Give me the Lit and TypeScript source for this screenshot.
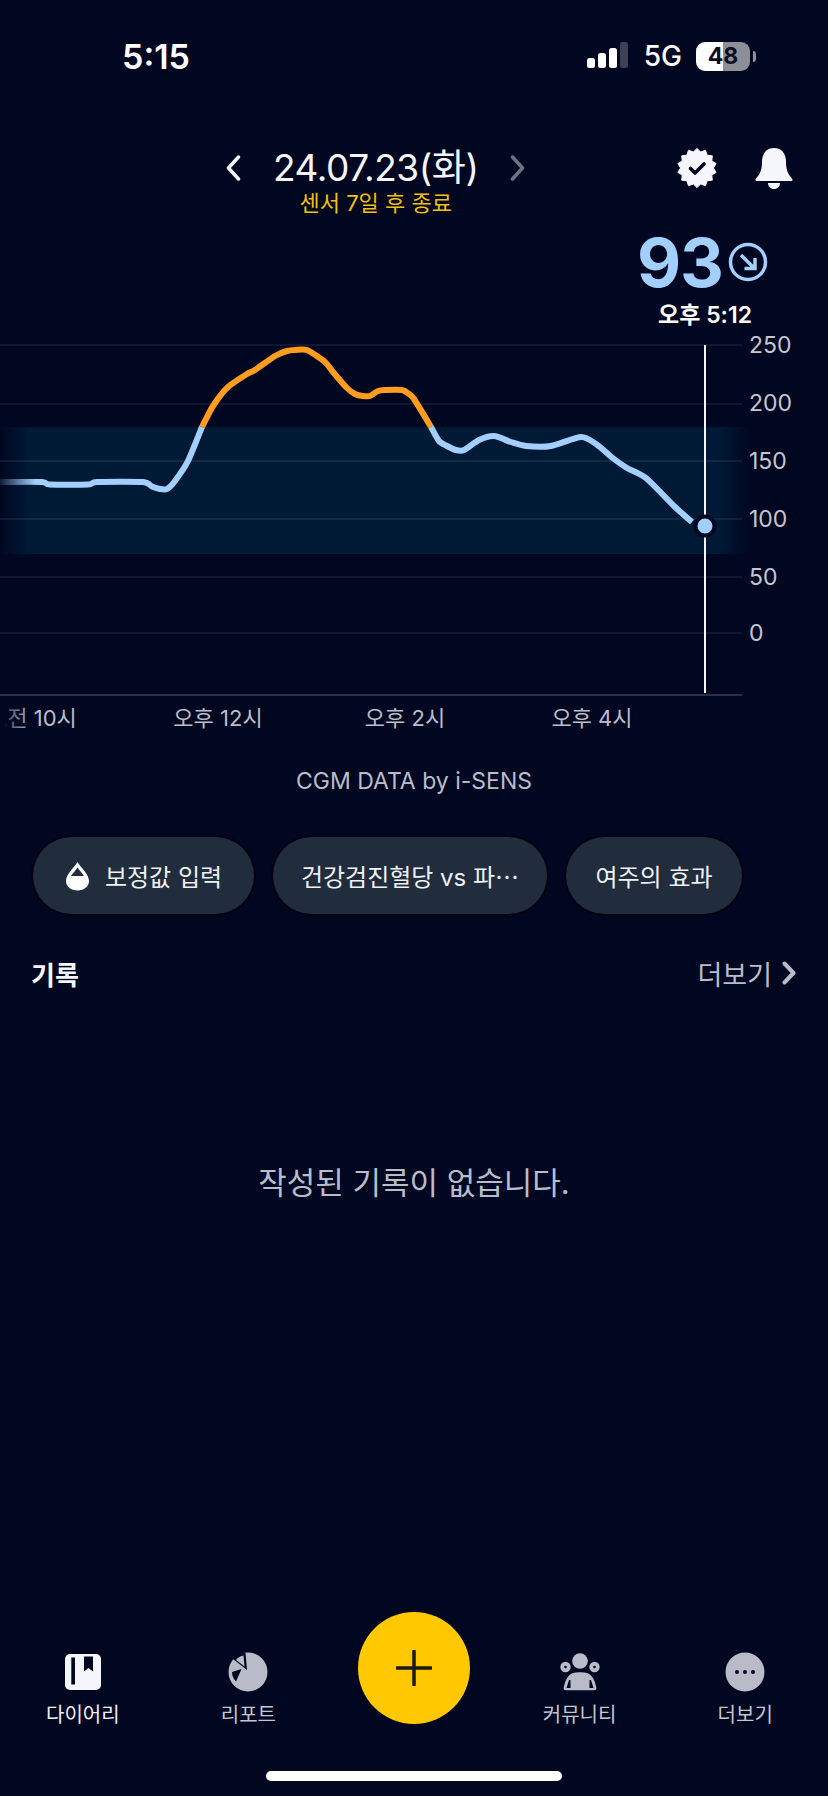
import { LitElement, html, css, svg } from 'lit';
import { customElement } from 'lit/decorators.js';

type Pt = [number, number];

const GRID = [346, 405, 462, 520, 578, 634];
const Y_LABELS = [
  ['250', 346],
  ['200', 404],
  ['150', 462],
  ['100', 520],
  ['50', 578],
  ['0', 634],
] as const;
const X_LABELS = [
  ['오후 12시', 218],
  ['오후 2시', 405],
  ['오후 4시', 592],
] as const;

// curve traced from the reference, in page coordinates
const BLUE_A: Pt[] = [[0, 483], [42, 483], [50, 485.5], [88, 485.5], [97, 483], [143, 483], [152, 487.5], [160, 490], [167, 490], [175, 482], [188, 462], [202, 428]];
const ORANGE: Pt[] = [[202, 428], [213, 407], [228, 388], [247, 375], [255, 371], [275, 357], [287, 352], [295, 351], [307, 351], [325, 363], [333, 373], [347, 389], [355, 395], [363, 397], [370, 397], [378, 392], [385, 391], [402, 391], [409, 395], [414, 400], [431, 428]];
const BLUE_B: Pt[] = [[431, 428], [439, 442], [447, 447], [456, 451], [464, 451], [479, 441], [494, 437], [511, 443], [526, 447], [551, 447], [581, 438], [596, 445], [614, 460], [627, 469], [646, 479], [674, 507], [692, 523]];

// catmull-rom through the traced points
function smooth(p: Pt[]) {
  let d = `M${p[0][0]} ${p[0][1]}`;
  for (let i = 0; i < p.length - 1; i++) {
    const a = p[Math.max(i - 1, 0)];
    const b = p[i];
    const c = p[i + 1];
    const e = p[Math.min(i + 2, p.length - 1)];
    const k = 0.12;
    d += `C${(b[0] + (c[0] - a[0]) * k).toFixed(1)} ${(b[1] + (c[1] - a[1]) * k).toFixed(1)} ${(c[0] - (e[0] - b[0]) * k).toFixed(1)} ${(c[1] - (e[1] - b[1]) * k).toFixed(1)} ${c[0]} ${c[1]}`;
  }
  return d;
}

function sealPoints() {
  const pts: string[] = [];
  const n = 14;
  for (let i = 0; i < n * 2; i++) {
    const r = i % 2 ? 16.4 : 19.6;
    const a = (i * Math.PI) / n - Math.PI / 2;
    pts.push(`${(20 + r * Math.cos(a)).toFixed(1)},${(20 + r * Math.sin(a)).toFixed(1)}`);
  }
  return pts.join(' ');
}

@customElement('app-root')
export class AppRoot extends LitElement {
  static override styles = css`
    :host {
      display: flex;
      flex-direction: column;
      width: 828px;
      height: 1796px;
      background: #010720;
      color: #fff;
      font-family: Inter, 'Noto Sans CJK KR', sans-serif;
      overflow: hidden;
    }
    svg { display: block; }

    /* status bar */
    .status {
      display: flex;
      align-items: center;
      justify-content: space-between;
      height: 112px;
      padding: 0 72px 0 122px;
      box-sizing: border-box;
    }
    .clock { font-size: 34px; font-weight: 600; }
    .status-right { display: flex; align-items: center; }
    .net { font-size: 28px; font-weight: 500; margin: 0 14px 0 15px; }
    .battery { width: 54px; height: 29px; border-radius: 9px; overflow: hidden;
      background: linear-gradient(90deg, #fff 0 50%, #8e8e98 50% 100%);
      color: #0a0d24; font-size: 23px; font-weight: 700; line-height: 29px; text-align: center; }
    .battery-tip { width: 3px; height: 11px; margin-left: 3px; border-radius: 0 3px 3px 0; background: #8e8e98; }

    /* date header */
    .head {
      display: flex;
      align-items: flex-start;
      justify-content: space-between;
      margin-top: 34px;
      padding: 0 34px 0 226px;
    }
    .date-col { display: flex; flex-direction: column; align-items: center; }
    .date-row { display: flex; align-items: center; gap: 32px; height: 44px; }
    .date { font-size: 37px; line-height: 44px; letter-spacing: -0.45px; color: #f4f6fb; }
    .sensor { font-size: 22px; line-height: 26px; color: #f2bf12; }
    .head-icons { display: flex; align-items: center; gap: 37px; height: 44px; }

    /* current reading */
    .reading { display: flex; align-items: center; justify-content: flex-end; gap: 5px;
      height: 64px; margin-top: 14px; padding-right: 60px; }
    .value { font-size: 68px; font-weight: 700; line-height: 64px; color: #a3cfff; letter-spacing: -1px; }
    .reading-time { align-self: flex-end; margin: 7px 76px 0 0; font-size: 23px; font-weight: 600; line-height: 28px; }

    .chart { flex: none; }
    .chart text { font-family: Inter, 'Noto Sans CJK KR', sans-serif; }
    .ylab { font-size: 23px; fill: #c3c7d2; dominant-baseline: central; }
    .xlab { font-size: 22px; fill: #b9bec9; text-anchor: middle; dominant-baseline: central; }
    .xlab.clip { fill: url(#xfade); }

    .credit { margin-top: 35px; font-size: 23px; line-height: 30px; text-align: center; color: #b8bec9; }

    /* chips */
    .chips { display: flex; gap: 19px; margin-top: 41px; padding-left: 33px; }
    .chip {
      display: flex;
      align-items: center;
      justify-content: center;
      gap: 15px;
      height: 77px;
      box-sizing: border-box;
      border-radius: 39px;
      background: #212c3c;
      box-shadow: 0 0 0 2px #000312;
      font-size: 24px;
      color: #eef1f6;
      white-space: nowrap;
    }
    .c1 { width: 221px; }
    .c2 { width: 274px; }
    .c3 { width: 176px; }

    /* records */
    .records { display: flex; align-items: center; justify-content: space-between;
      height: 36px; margin-top: 41px; padding: 0 32px 0 31px; }
    .records-title { font-size: 26px; font-weight: 700; color: #f4f6fb; }
    .more { display: flex; align-items: center; gap: 10px; font-size: 27px; color: #b8bec9; }
    .empty { margin-top: 172px; font-size: 31px; line-height: 40px; text-align: center; color: #b8bec9; }

    /* tab bar */
    .tabs { display: grid; grid-template-columns: repeat(5, 1fr); margin-top: auto; }
    .tab { display: flex; flex-direction: column; align-items: center; padding-top: 38px; height: 117px; box-sizing: border-box; }
    .tab-icon { display: flex; align-items: center; justify-content: center; height: 44px; }
    .tab-label { margin-top: 7px; font-size: 20px; line-height: 28px; color: #c2c6d1; white-space: nowrap; }
    .tab.on .tab-label { color: #eef1f6; }
    .fab-cell { display: flex; justify-content: center; }
    .fab { display: flex; align-items: center; justify-content: center; width: 112px; height: 112px;
      border-radius: 50%; background: #ffc800; }
    .home { width: 296px; height: 10px; margin: 42px auto 15px; border-radius: 5px; background: #fff; flex: none; }
  `;

  private chart() {
    return html`<svg class="chart" width="828" height="402" viewBox="0 330 828 402">
      <defs>
        <linearGradient id="band" x1="0" x2="750" y1="0" y2="0" gradientUnits="userSpaceOnUse">
          <stop offset="0" stop-color="#001a36" stop-opacity="0" />
          <stop offset="0.04" stop-color="#001a36" />
          <stop offset="0.955" stop-color="#001a36" />
          <stop offset="1" stop-color="#001a36" stop-opacity="0" />
        </linearGradient>
        <linearGradient id="fadeIn" x1="0" x2="36" y1="0" y2="0" gradientUnits="userSpaceOnUse">
          <stop offset="0" stop-color="#a3cfff" stop-opacity="0.1" />
          <stop offset="1" stop-color="#a3cfff" />
        </linearGradient>
        <linearGradient id="xfade" x1="5" x2="34" y1="0" y2="0" gradientUnits="userSpaceOnUse">
          <stop offset="0" stop-color="#b9bec9" stop-opacity="0" />
          <stop offset="0.15" stop-color="#b9bec9" stop-opacity="0.45" />
          <stop offset="1" stop-color="#b9bec9" />
        </linearGradient>
      </defs>
      <rect x="0" y="428" width="750" height="127" fill="url(#band)" />
      ${GRID.map((y) => svg`<line x1="0" x2="742" y1=${y} y2=${y} stroke="#fff" stroke-opacity="0.09" stroke-width="1.5" />`)}
      <line x1="0" x2="742" y1="696" y2="696" stroke="#fff" stroke-opacity="0.22" stroke-width="1.5" />
      <path d=${smooth(BLUE_A)} fill="none" stroke="url(#fadeIn)" stroke-width="6" />
      <path d=${smooth(ORANGE)} fill="none" stroke="#ff9d1e" stroke-width="6" />
      <path d=${smooth(BLUE_B)} fill="none" stroke="#a3cfff" stroke-width="6" />
      <line x1="705" x2="705" y1="346" y2="694" stroke="#f4f6fb" stroke-width="2" />
      <circle cx="705" cy="527" r="9.5" fill="#a3cfff" stroke="#010720" stroke-width="4" />
      ${Y_LABELS.map(([t, y]) => svg`<text class="ylab" x="749" y=${y}>${t}</text>`)}
      <text class="xlab clip" x="32" y="719">오전 10시</text>
      ${X_LABELS.map(([t, x]) => svg`<text class="xlab" x=${x} y="719">${t}</text>`)}
    </svg>`;
  }

  override render() {
    return html`
      <div class="status">
        <div class="clock">5:15</div>
        <div class="status-right">
          <svg width="42" height="28" viewBox="0 0 42 28">
            <rect x="0" y="16" width="8" height="10" rx="2.5" fill="#fff" />
            <rect x="11" y="11" width="8" height="15" rx="2.5" fill="#fff" />
            <rect x="22" y="6" width="8" height="20" rx="2.5" fill="#fff" />
            <rect x="33" y="0" width="8" height="26" rx="2.5" fill="#3c4156" />
          </svg>
          <div class="net">5G</div>
          <div class="battery">48</div>
          <div class="battery-tip"></div>
        </div>
      </div>

      <div class="head">
        <div class="date-col">
          <div class="date-row">
            <svg width="15" height="26" viewBox="0 0 15 26"><path d="M12.5 2 2.5 13l10 11" fill="none" stroke="#f4f6fb" stroke-width="3.5" stroke-linecap="round" stroke-linejoin="round" /></svg>
            <div class="date">24.07.23(화)</div>
            <svg width="15" height="26" viewBox="0 0 15 26"><path d="M2.5 2l10 11-10 11" fill="none" stroke="#6f7382" stroke-width="3.5" stroke-linecap="round" stroke-linejoin="round" /></svg>
          </div>
          <div class="sensor">센서 7일 후 종료</div>
        </div>
        <div class="head-icons">
          <svg width="40" height="40" viewBox="0 0 40 40">
            <polygon points=${sealPoints()} fill="#f4f6fb" stroke="#f4f6fb" stroke-width="1" stroke-linejoin="round" />
            <path d="M13.5 20.5l4.5 4.5 9-9" fill="none" stroke="#010720" stroke-width="3.6" stroke-linecap="round" stroke-linejoin="round" />
          </svg>
          <svg width="40" height="44" viewBox="0 0 40 44">
            <path d="M20 2C12 2 8 8 8 16c0 8-2 12-6 16.5-1 1.5-.5 2.5 1 2.5h34c1.5 0 2-1 1-2.5C34 28 32 24 32 16c0-8-4-14-12-14z" fill="#f4f6fb" />
            <path d="M14 37h12c0 3.500-2.500 6-6 6s-6-2.500-6-6z" fill="#f4f6fb" />
          </svg>
        </div>
      </div>

      <div class="reading">
        <div class="value">93</div>
        <svg width="40" height="40" viewBox="0 0 40 40">
          <circle cx="20" cy="20" r="17.5" fill="none" stroke="#a3cfff" stroke-width="3.5" />
          <path d="M13 13l13 13M27 16v10.500H16.500" fill="none" stroke="#a3cfff" stroke-width="3.5" />
        </svg>
      </div>
      <div class="reading-time">오후 5:12</div>

      ${this.chart()}

      <div class="credit">CGM DATA by i-SENS</div>

      <div class="chips">
        <div class="chip c1">
          <svg width="25" height="30" viewBox="0 0 25 30">
            <path d="M12.5 1C9 7 1 13 1 20c0 5.5 5 9.500 11.500 9.500S24 25.500 24 20C24 13 16 7 12.500 1z" fill="#fff" />
            <path d="M12.5 6.5C10.500 9.500 8 12 6 15h13C17 12 14.500 9.500 12.500 6.500z" fill="#212c3c" />
          </svg>
          <span>보정값 입력</span>
        </div>
        <div class="chip c2">건강검진혈당 vs 파⋯</div>
        <div class="chip c3">여주의 효과</div>
      </div>

      <div class="records">
        <div class="records-title">기록</div>
        <div class="more">
          <span>더보기</span>
          <svg width="14" height="24" viewBox="0 0 14 24"><path d="M2.5 2.500l9 9.500-9 9.500" fill="none" stroke="#b8bec9" stroke-width="4" stroke-linecap="round" stroke-linejoin="round" /></svg>
        </div>
      </div>

      <div class="empty">작성된 기록이 없습니다.</div>

      <div class="tabs">
        <div class="tab on">
          <div class="tab-icon">
            <svg width="36" height="36" viewBox="0 0 36 36">
              <rect width="36" height="36" rx="5" fill="#f4f6fb" />
              <rect x="6.3" y="3.5" width="3.7" height="27" fill="#010720" />
              <path d="M19 2.500h9v15l-4.500-3.500L19 17.500z" fill="#010720" />
            </svg>
          </div>
          <div class="tab-label">다이어리</div>
        </div>
        <div class="tab">
          <div class="tab-icon">
            <svg width="40" height="40" viewBox="0 0 40 40">
              <circle cx="20" cy="20" r="19.5" fill="#b9bcc8" />
              <path d="M17.5 0.500 19 18 5 7C8 3 12 1 17.500 0.500z" fill="#010720" />
              <path d="M15.5 3.500 16.500 14.500 8 8C10 5.500 12.500 4 15.500 3.500z" fill="#b9bcc8" />
              <path d="M13.5 17 4 20C4 24 5.500 27 8 29.500z" fill="#010720" />
            </svg>
          </div>
          <div class="tab-label">리포트</div>
        </div>
        <div class="fab-cell">
          <div class="fab">
            <svg width="36" height="36" viewBox="0 0 36 36"><path d="M18 1v34M1 18h34" stroke="#1a1a1a" stroke-width="3.5" stroke-linecap="round" /></svg>
          </div>
        </div>
        <div class="tab">
          <div class="tab-icon">
            <svg width="40" height="38" viewBox="0 0 40 38">
              <circle cx="20" cy="8" r="7.8" fill="#b9bcc8" />
              <circle cx="5.5" cy="14" r="5.2" fill="#b9bcc8" />
              <circle cx="34.500" cy="14" r="5.2" fill="#b9bcc8" />
              <circle cx="5.5" cy="14" r="1.3" fill="#010720" />
              <circle cx="34.500" cy="14" r="1.3" fill="#010720" />
              <path d="M12 19.500c2.500-1 5-1 8-1s5.500 0 8 1c4 1.500 6 5.500 7.500 9l1.500 5.500c.5 2.500-.5 4-2.500 4h-29C3.500 38 2.500 36.500 3 34l1.500-5.500C6 25 8 21 12 19.500z" fill="#b9bcc8" stroke="#010720" stroke-width="1.5" />
              <path d="M6.500 35l2.500-8 1.500 0v8zM33.500 35l-2.500-8-1.500 0v8z" fill="#010720" />
            </svg>
          </div>
          <div class="tab-label">커뮤니티</div>
        </div>
        <div class="tab">
          <div class="tab-icon">
            <svg width="40" height="40" viewBox="0 0 40 40">
              <circle cx="20" cy="20" r="19.5" fill="#b9bcc8" />
              <circle cx="12" cy="20" r="2" fill="#010720" />
              <circle cx="20" cy="20" r="2" fill="#010720" />
              <circle cx="28" cy="20" r="2" fill="#010720" />
            </svg>
          </div>
          <div class="tab-label">더보기</div>
        </div>
      </div>
      <div class="home"></div>
    `;
  }
}

declare global {
  interface HTMLElementTagNameMap { 'app-root': AppRoot; }
}
